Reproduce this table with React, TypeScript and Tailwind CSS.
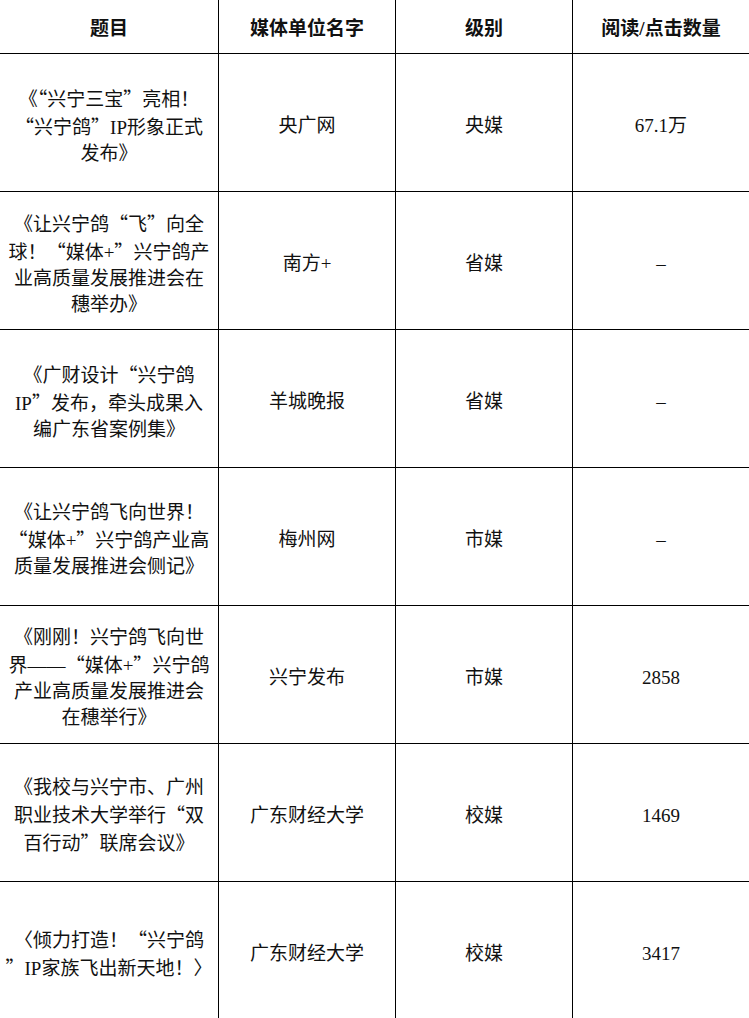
import React from "react";

type Row = {
  title: string[];
  media: string;
  level: string;
  reads: string;
};

const rows: Row[] = [
  {
    title: ["《“兴宁三宝”亮相！", "“兴宁鸽”IP形象正式", "发布》"],
    media: "央广网",
    level: "央媒",
    reads: "67.1万",
  },
  {
    title: ["《让兴宁鸽“飞”向全", "球！“媒体+”兴宁鸽产", "业高质量发展推进会在", "穗举办》"],
    media: "南方+",
    level: "省媒",
    reads: "–",
  },
  {
    title: ["《广财设计“兴宁鸽", "IP”发布，牵头成果入", "编广东省案例集》"],
    media: "羊城晚报",
    level: "省媒",
    reads: "–",
  },
  {
    title: ["《让兴宁鸽飞向世界！", "“媒体+”兴宁鸽产业高", "质量发展推进会侧记》"],
    media: "梅州网",
    level: "市媒",
    reads: "–",
  },
  {
    title: ["《刚刚！兴宁鸽飞向世", "界——“媒体+”兴宁鸽", "产业高质量发展推进会", "在穗举行》"],
    media: "兴宁发布",
    level: "市媒",
    reads: "2858",
  },
  {
    title: ["《我校与兴宁市、广州", "职业技术大学举行“双", "百行动”联席会议》"],
    media: "广东财经大学",
    level: "校媒",
    reads: "1469",
  },
  {
    title: ["〈倾力打造！“兴宁鸽", "”IP家族飞出新天地！〉"],
    media: "广东财经大学",
    level: "校媒",
    reads: "3417",
  },
];

const font = "font-['Liberation_Serif','Noto_Sans_CJK_SC',serif]";

// curly quotes are full width in the source document
function Line({ text }: { text: string }) {
  const parts = text.split(/([“”])/);
  return (
    <span>
      {parts.map((p, i) =>
        p === "“" || p === "”" ? (
          <span key={i} className="font-['Noto_Sans_CJK_SC',sans-serif] [font-feature-settings:'fwid']">
            {p}
          </span>
        ) : (
          <React.Fragment key={i}>{p}</React.Fragment>
        )
      )}
    </span>
  );
}

function Cell({ children, last, header }: { children: React.ReactNode; last?: boolean; header?: boolean }) {
  return (
    <div
      className={`flex items-center justify-center border-b border-black text-center ${last ? "" : "border-r"} ${
        header ? "h-[54px] pt-[5px] font-bold" : "h-[138px] pt-[6px]"
      }`}
    >
      {children}
    </div>
  );
}

export default function App() {
  return (
    <div className={`w-[749px] h-[1018px] overflow-hidden bg-white text-[19px] leading-[26px] text-[#111] ${font}`}>
      <div className="grid grid-cols-[219px_177px_177px_176px]">
        <Cell header>题目</Cell>
        <Cell header>媒体单位名字</Cell>
        <Cell header>级别</Cell>
        <Cell header last>阅读/点击数量</Cell>
        {rows.map((r, i) => (
          <React.Fragment key={i}>
            <Cell>
              <div className="flex flex-col items-center whitespace-nowrap">
                {r.title.map((t, j) => (
                  <Line key={j} text={t} />
                ))}
              </div>
            </Cell>
            <Cell>{r.media}</Cell>
            <Cell>{r.level}</Cell>
            <Cell last>{r.reads}</Cell>
          </React.Fragment>
        ))}
      </div>
    </div>
  );
}
